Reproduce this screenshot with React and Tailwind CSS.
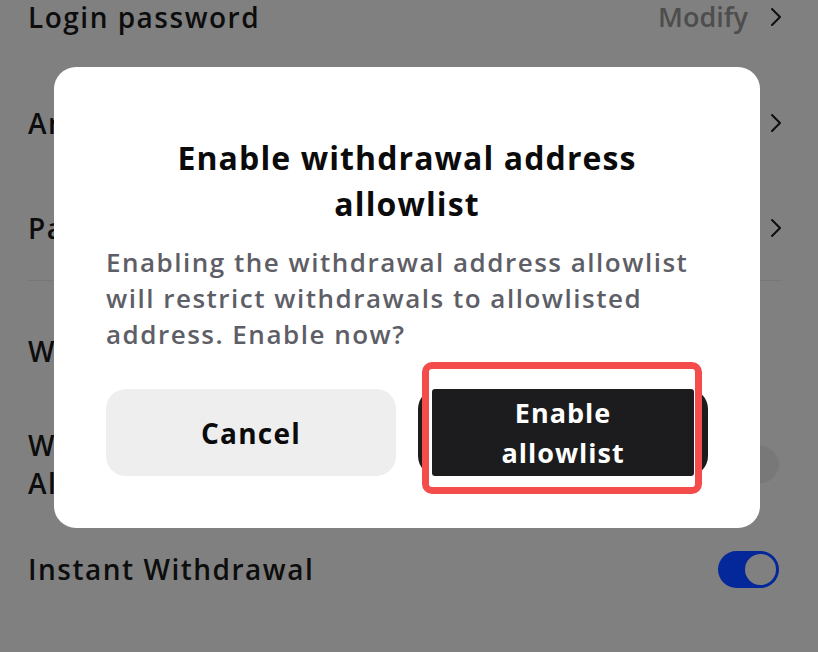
import React from 'react';

const Chevron = () => (
  <svg width="12" height="20" viewBox="0 0 12 20" fill="none" className="shrink-0">
    <path d="M2 2l8 8-8 8" stroke="#0d0d0d" strokeWidth="2" strokeLinecap="round" strokeLinejoin="round" />
  </svg>
);

const Toggle = ({ on }) => (
  <div
    className={
      on
        ? 'w-[61px] h-[37px] rounded-full bg-[#04279a] flex items-center justify-end pr-[1px]'
        : 'w-[61px] h-[37px] rounded-full bg-[#787878] flex items-center justify-start pl-[1px]'
    }
  >
    <div className={on ? 'w-[35px] h-[35px] rounded-full bg-[#808080] border-2 border-[#04279a]' : 'w-[35px] h-[35px] rounded-full bg-[#808080]'} />
  </div>
);

export default function App() {
  return (
    <div
      className="relative w-[818px] h-[652px] overflow-hidden bg-[#808080] text-[#0d0d0d]"
      style={{ fontFamily: '"Open Sans", Lato, sans-serif' }}
    >
      {/* settings list behind the dialog */}
      <div className="pl-7 pr-[36px] text-[28px] leading-[32px] font-semibold tracking-[1.5px]">
        <div className="h-[70px] pt-[1px] flex items-start justify-between">
          <span>Login password</span>
          <div className="h-[32px] flex items-center gap-[22px]">
            <span className="text-[27px] tracking-normal text-[#4d4d4d]">Modify</span>
            <Chevron />
          </div>
        </div>
        <div className="h-[106px] flex items-center justify-between">
          <span>Anti-phishing code</span>
          <Chevron />
        </div>
        <div className="h-[105px] flex items-center justify-between border-b border-[#777777]">
          <span>Passkeys</span>
          <Chevron />
        </div>
        <div className="h-[140px] flex items-center justify-between">
          <span>Withdrawal settings</span>
        </div>
        <div className="h-[86px] flex items-center justify-between pr-[3px]">
          <span className="leading-[38px]">
            Withdrawal Address
            <br />
            Allowlist
          </span>
          <Toggle on={false} />
        </div>
        <div className="h-[124px] flex items-center justify-between pr-[3px]">
          <span>Instant Withdrawal</span>
          <Toggle on />
        </div>
      </div>

      {/* dialog */}
      <div className="absolute inset-0">
        <div className="ml-[54px] mt-[67px] w-[706px] rounded-[22px] bg-white px-[52px] pt-[68px] pb-[52px]">
          <h2 className="text-center text-[32px] leading-[46px] font-bold tracking-[1.1px] text-[#0b0b0b]">
            Enable withdrawal address
            <br />
            allowlist
          </h2>
          <p className="mt-[17px] text-[26px] leading-[36px] font-semibold tracking-[1.5px] text-[#5e5e66]">
            Enabling the withdrawal address allowlist will restrict withdrawals to allowlisted address. Enable now?
          </p>
          <div className="relative mt-[37px] flex gap-[22px]">
            <button className="flex-1 h-[87px] rounded-[20px] bg-[#eeeeee] text-[28px] font-bold tracking-[1.2px] text-[#0b0b0b]">
              Cancel
            </button>
            <div className="flex-1 h-[87px] rounded-[20px] bg-[#1c1c1e]" />
            {/* red highlight annotation */}
            <div className="absolute left-[316px] -top-[27px] w-[280px] h-[132px] rounded-[10px] border-[7px] border-[#f44b4b] bg-white pt-[20px] pl-[3px] pr-[1px]">
              <button className="w-full h-[87px] rounded-[3px] bg-[#1c1c1e] flex items-center justify-center text-center text-[27px] leading-[40px] font-bold tracking-[1px] text-white">
                Enable
                <br />
                allowlist
              </button>
            </div>
          </div>
        </div>
      </div>
    </div>
  );
}
